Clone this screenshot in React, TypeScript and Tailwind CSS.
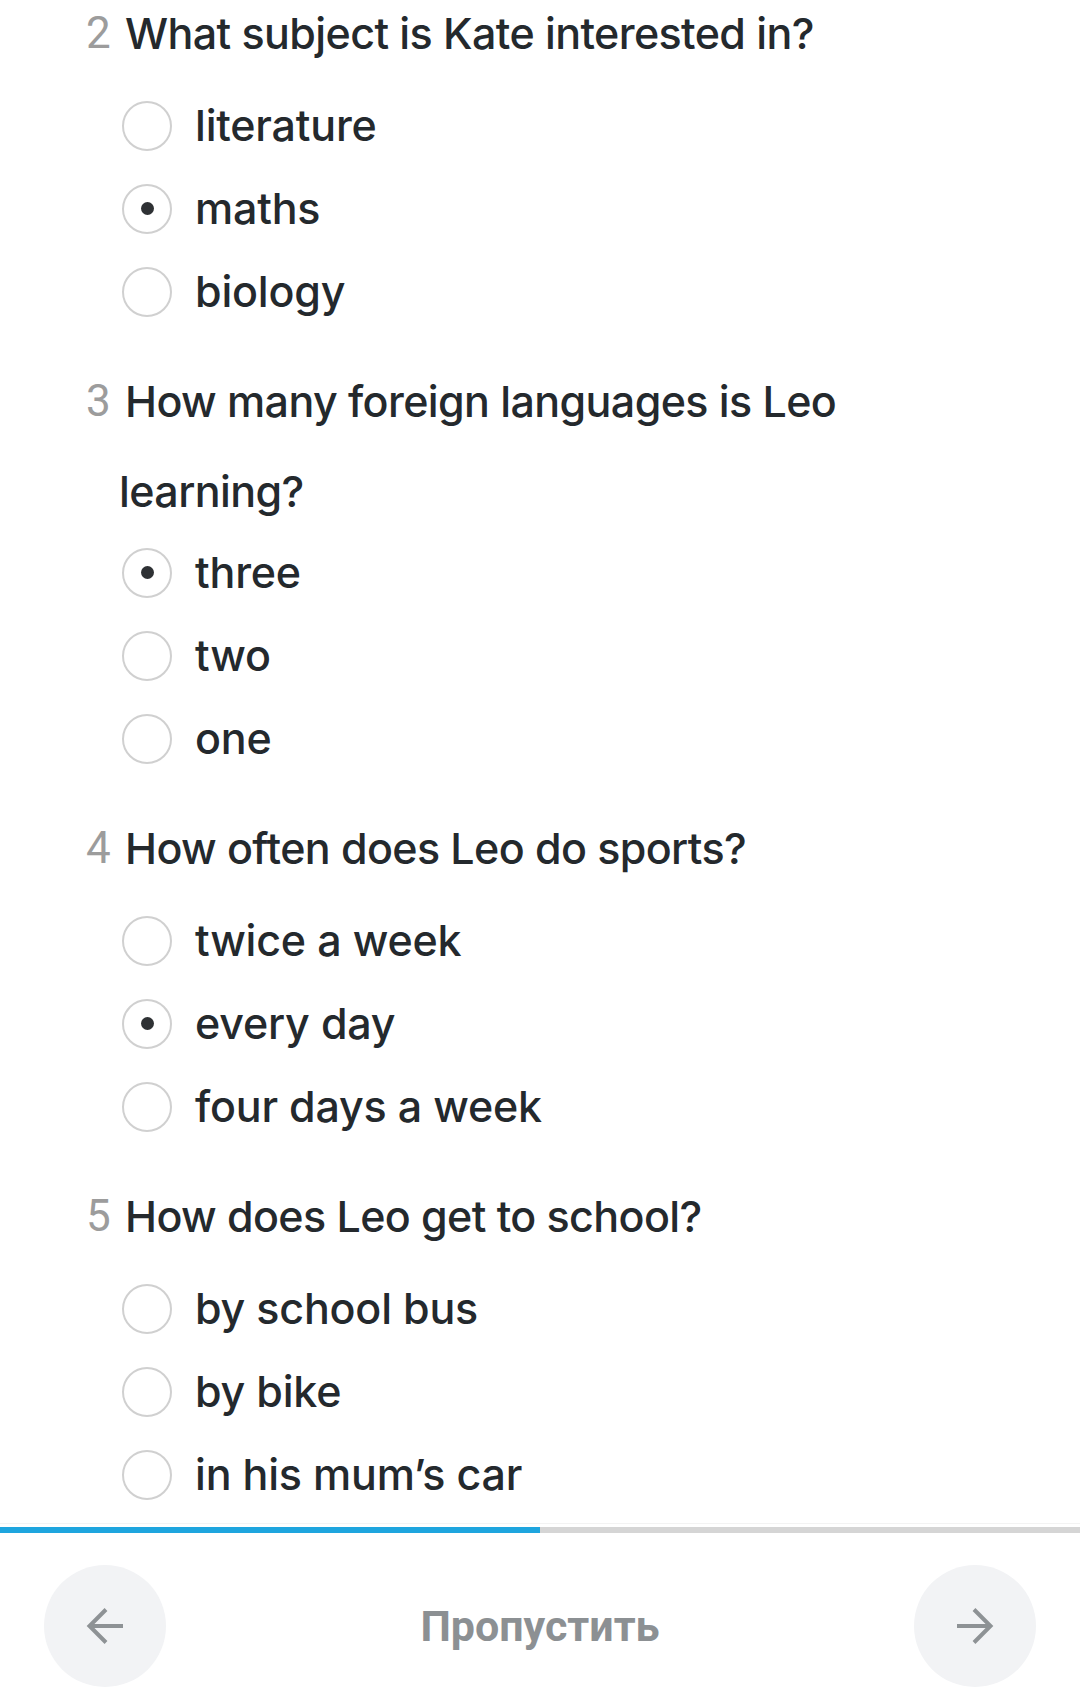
import React from "react";

type Question = {
  num: number;
  lines: string[];
  options: string[];
  selected: number;
  optionsOffset: string;
  top: string;
};

const questions: Question[] = [
  {
    num: 2,
    lines: ["What subject is Kate interested in?"],
    options: ["literature", "maths", "biology"],
    selected: 1,
    optionsOffset: "mt-[6px]",
    top: "-mt-[12px]",
  },
  {
    num: 3,
    lines: ["How many foreign languages is Leo", "learning?"],
    options: ["three", "two", "one"],
    selected: 0,
    optionsOffset: "-mt-[5px]",
    top: "mt-[23px]",
  },
  {
    num: 4,
    lines: ["How often does Leo do sports?"],
    options: ["twice a week", "every day", "four days a week"],
    selected: 1,
    optionsOffset: "mt-[6px]",
    top: "mt-[23px]",
  },
  {
    num: 5,
    lines: ["How does Leo get to school?"],
    options: ["by school bus", "by bike", "in his mum’s car"],
    selected: -1,
    optionsOffset: "mt-[6px]",
    top: "mt-[23px]",
  },
];

function Radio({ checked }: { checked: boolean }) {
  return (
    <span className="flex h-[50px] w-[50px] flex-none items-center justify-center rounded-full border-[2.5px] border-[#d0d0d0]">
      {checked && <span className="h-[13px] w-[13px] rounded-full bg-[#2e3134]" />}
    </span>
  );
}

function QuestionBlock({ q }: { q: Question }) {
  return (
    <section className={q.top}>
      <div className="flex pl-[86px]">
        <span className="w-[39px] flex-none font-['Roboto'] text-[44px] leading-[90px] text-[#9c9c9c]">
          {q.num}
        </span>
        <div className="text-[43px] font-medium leading-[90px] tracking-[-0.6px] text-[#24292d]">
          {q.lines.map((line, i) => (
            <div key={i} className={i > 0 ? "-ml-[6px]" : ""}>
              {line}
            </div>
          ))}
        </div>
      </div>
      <ul className={`${q.optionsOffset} pl-[122px]`}>
        {q.options.map((opt, i) => (
          <li key={opt} className="flex h-[83px] items-center gap-[23px]">
            <Radio checked={i === q.selected} />
            <span className="text-[43px] font-medium leading-none tracking-[-0.2px] text-[#24292d]">
              {opt}
            </span>
          </li>
        ))}
      </ul>
    </section>
  );
}

function Arrow({ dir }: { dir: "left" | "right" }) {
  return (
    <svg
      width="40"
      height="40"
      viewBox="0 0 40 40"
      fill="none"
      stroke="#8e9295"
      strokeWidth="4"
      className={dir === "right" ? "rotate-180" : ""}
    >
      <path d="M38 20H5" />
      <path d="M21 3.5L4.5 20L21 36.5" />
    </svg>
  );
}

export default function App() {
  return (
    <div className="flex h-[1700px] w-[1080px] flex-col overflow-hidden bg-white font-['Inter',sans-serif]">
      <main className="flex-1 overflow-hidden">
        {questions.map((q) => (
          <QuestionBlock key={q.num} q={q} />
        ))}
      </main>
      <footer className="h-[177px] flex-none border-t border-[#f3f3f3] pt-[3px]">
        <div className="flex h-[6px] bg-[#d5d5d5]">
          <div className="w-1/2 bg-[#1ea5de]" />
        </div>
        <div className="flex items-center justify-between px-[44px] pt-[32px]">
          <button className="flex h-[122px] w-[122px] items-center justify-center rounded-full bg-[#f2f3f5]">
            <Arrow dir="left" />
          </button>
          <span className="font-['Roboto',sans-serif] text-[43px] font-bold text-[#8c9093]">
            Пропустить
          </span>
          <button className="flex h-[122px] w-[122px] items-center justify-center rounded-full bg-[#f2f3f5]">
            <Arrow dir="right" />
          </button>
        </div>
      </footer>
    </div>
  );
}
